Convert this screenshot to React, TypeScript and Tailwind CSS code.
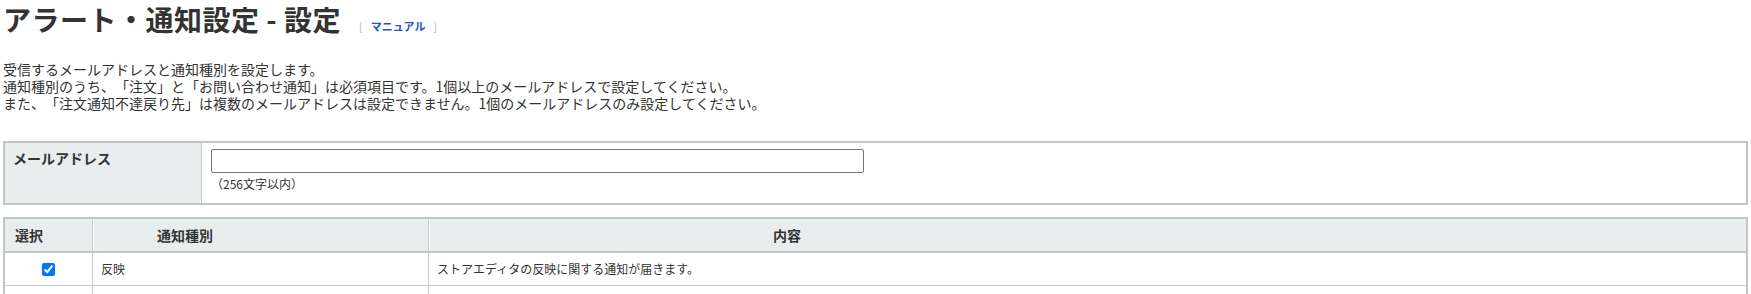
import React from 'react';

const rows = [
  { name: '反映', desc: 'ストアエディタの反映に関する通知が届きます。', checked: true },
];

export default function App() {
  return (
    <div className='font-["Noto_Sans_CJK_JP","Noto_Sans",sans-serif] [text-spacing-trim:space-all] text-[#333] bg-white min-h-[294px] px-[3px] pt-[3px]'>
      {/* --- page title --- */}
      <div className="flex items-end h-[32px]">
        <h1 className="text-[28px] font-bold leading-[32px] tracking-[0.5px]">アラート・通知設定 - 設定</h1>
        <span className="ml-[18px] mb-[1px] text-[11px] leading-[16px]">
          <span className="text-[#bbb]">[</span>
          <a href="#" className="mx-[8px] font-bold text-[#1a56c9]">マニュアル</a>
          <span className="text-[#bbb]">]</span>
        </span>
      </div>

      {/* --- description --- */}
      <div className="mt-[26px] text-[14px] leading-[17px]">
        <p>受信するメールアドレスと通知種別を設定します。</p>
        <p>通知種別のうち、「注文」と「お問い合わせ通知」は必須項目です。1個以上のメールアドレスで設定してください。</p>
        <p>また、「注文通知不達戻り先」は複数のメールアドレスは設定できません。1個のメールアドレスのみ設定してください。</p>
      </div>

      {/* --- mail address --- */}
      <div className="mt-[29px] flex h-[64px] border-2 border-[#c0c6c3]">
        <div className="w-[197px] shrink-0 bg-[#e9edee] border-r border-[#c8cdcb] pl-[8px] pt-[6px] text-[14px] leading-[18px] font-bold">
          メールアドレス
        </div>
        <div className="pl-[9px] pt-[6px]">
          <input
            type="text"
            className="block w-[653px] h-[24px] border border-[#767676] rounded-[2px] outline-none bg-white"
          />
          <div className="mt-[2px] text-[12px] leading-[18px]">（256文字以内）</div>
        </div>
      </div>

      {/* --- notification types --- */}
      <div className="mt-[12px] border-2 border-b-0 border-[#c0c6c3]">
        <div className="grid grid-cols-[88px_336px_1fr] h-[34px] bg-[#e9edee] border-b-2 border-[#c0c6c3] text-[14px] font-bold leading-[32px]">
          <div className="pl-[10px] border-r border-[#c8cdcb] shadow-[1px_0_0_#fff]">選択</div>
          <div className="pl-[64px] border-r border-[#c8cdcb] shadow-[1px_0_0_#fff]">通知種別</div>
          <div className="pl-[344px]">内容</div>
        </div>
        {rows.map((r) => (
          <div key={r.name} className="grid grid-cols-[88px_336px_1fr] h-[33px] border-b border-[#c8cdcb] text-[12px] leading-[32px]">
            <div className="flex items-center justify-center border-r border-[#c8cdcb]">
              <input type="checkbox" defaultChecked={r.checked} className="w-[13px] h-[13px] m-0" />
            </div>
            <div className="pl-[8px] border-r border-[#c8cdcb]">{r.name}</div>
            <div className="pl-[8px]">{r.desc}</div>
          </div>
        ))}
        <div className="grid grid-cols-[88px_336px_1fr] h-[32px]">
          <div className="border-r border-[#c8cdcb]"></div>
          <div className="border-r border-[#c8cdcb]"></div>
          <div></div>
        </div>
      </div>
    </div>
  );
}
